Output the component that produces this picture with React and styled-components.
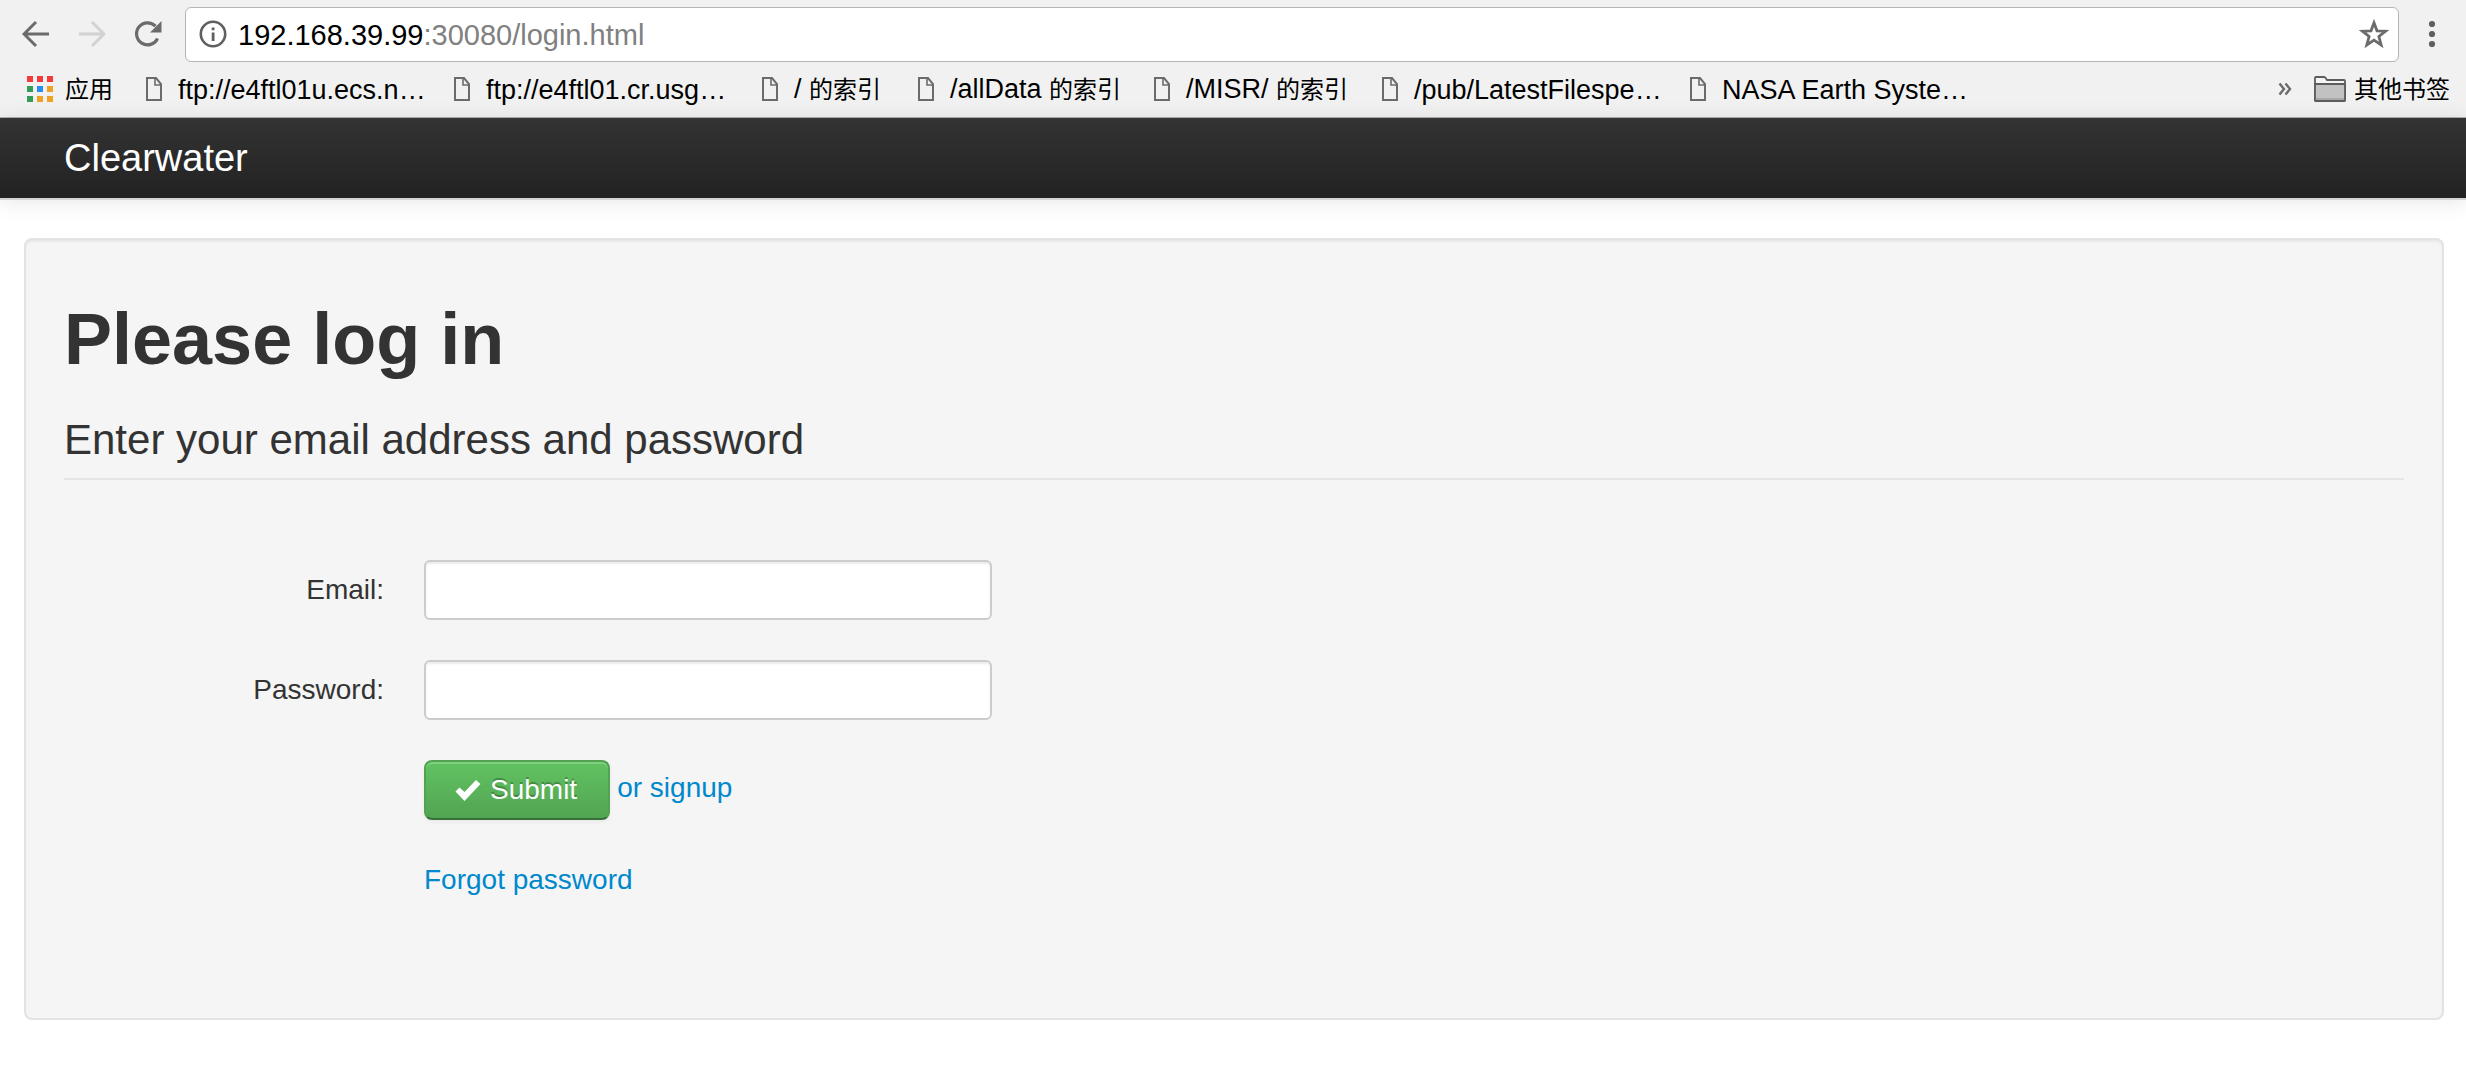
import React from "react";
import styled, { createGlobalStyle } from "styled-components";

const GlobalStyle = createGlobalStyle`
  *, *::before, *::after { box-sizing: border-box; }
  body {
    margin: 0;
    background: #fff;
    color: #333;
    font-family: "Liberation Sans", "Noto Sans CJK SC", sans-serif;
    font-size: 28px;
  }
  a { color: #0088cc; text-decoration: none; }
  svg { display: block; flex: none; }
`;

const BrowserChrome = styled.header`
  background: #f1f1f1;
  border-bottom: 1px solid #a9b1aa;
  color: #000;
`;

const Toolbar = styled.div`
  display: flex;
  align-items: center;
  height: 68px;
  padding: 0 18px 0 20px;
`;

const ToolButton = styled.button`
  display: flex;
  align-items: center;
  justify-content: center;
  width: 32px;
  height: 32px;
  margin-right: ${(p) => p.$after || 0}px;
  padding: 0;
  border: 0;
  background: none;
`;

const AddressBar = styled.div`
  flex: 1;
  display: flex;
  align-items: center;
  height: 55px;
  margin-right: 17px;
  padding: 0 8px 0 11px;
  border: 1px solid #b5b5b5;
  border-radius: 6px;
  background: #fff;
`;

const Address = styled.div`
  flex: 1;
  margin-left: 9px;
  font-size: 29px;
  line-height: 40px;
  padding-top: 2px;
  white-space: nowrap;
  color: #808080;
`;

const Host = styled.span`
  color: #000;
`;

const BookmarkBar = styled.nav`
  display: flex;
  align-items: center;
  height: 49px;
  padding: 0 16px 8px 27px;
  line-height: 40px;
`;

const Bookmark = styled.a`
  display: flex;
  align-items: center;
  gap: 16px;
  width: ${(p) => p.$width}px;
  color: #000;
  white-space: nowrap;
`;

const BookmarkLabel = styled.span`
  padding-top: 2px;
  font-size: 27px;
`;

const Chinese = styled.span`
  font-size: 24px;
`;

const AppsLink = styled(Bookmark)`
  gap: 12px;
`;

const Overflow = styled.div`
  display: flex;
  align-items: center;
  gap: 13px;
  margin-left: auto;
`;

const FolderLink = styled(Bookmark)`
  gap: 8px;
  width: auto;
`;

const Navbar = styled.div`
  height: 82px;
  padding: 0 64px;
  background: linear-gradient(#333, #222);
  border-bottom: 2px solid #d4d4d4;
  box-shadow: 0 2px 20px rgba(0, 0, 0, 0.1);
`;

const Brand = styled.a`
  && { color: #fff; }
  font-size: 38px;
  line-height: 80px;
`;

const Well = styled.main`
  margin: 38px 22px 38px 24px;
  padding: 58px 38px 118px;
  border: 2px solid #e3e3e3;
  border-radius: 8px;
  background: #f5f5f5;
  box-shadow: inset 0 2px 2px rgba(0, 0, 0, 0.05);
`;

const Title = styled.h1`
  margin: 0 0 18px;
  font-size: 72px;
  line-height: 82px;
`;

const Fieldset = styled.fieldset`
  margin: 0;
  padding: 0;
  border: 0;
`;

const Legend = styled.legend`
  width: 100%;
  margin-bottom: 80px;
  padding: 4px 0 0;
  border-bottom: 2px solid #e5e5e5;
  font-size: 42px;
  line-height: 76px;
`;

const Fields = styled.div`
  display: grid;
  grid-template-columns: 320px 1fr;
  gap: 40px;
`;

const Label = styled.label`
  line-height: 60px;
  text-align: right;
`;

const TextField = styled.input`
  width: 568px;
  height: 60px;
  padding: 8px 12px;
  border: 2px solid #ccc;
  border-radius: 6px;
  background: #fff;
  box-shadow: inset 0 2px 2px rgba(0, 0, 0, 0.075);
  font: inherit;
`;

const Actions = styled.div`
  grid-column: 2;
  display: flex;
  gap: 7px;
  line-height: 56px;
`;

const Submit = styled.button`
  display: flex;
  align-items: center;
  gap: 8px;
  height: 60px;
  padding: 0 31px 0 28px;
  border: 2px solid;
  border-color: #51a351 #51a351 #387038;
  border-radius: 8px;
  background: linear-gradient(#62c462, #51a351) border-box;
  box-shadow: inset 0 2px 0 rgba(255, 255, 255, 0.2), 0 2px 4px rgba(0, 0, 0, 0.05);
  color: #fff;
  font: inherit;
  text-shadow: 0 -2px 0 rgba(0, 0, 0, 0.25);
`;

const Recovery = styled.div`
  grid-column: 2;
  line-height: 40px;
`;

const Arrow = ({ color, flip }) => (
  <svg width="28" height="28" viewBox="0 0 28 28" fill="none" stroke={color} strokeWidth="3">
    <path d={flip ? "M1 14H26M14 2L26 14L14 26" : "M27 14H2M14 2L2 14L14 26"} />
  </svg>
);

const Reload = () => (
  <svg width="28" height="28" viewBox="0 0 28 28">
    <path d="M23.5 18.5A11 11 0 1 1 21.5 6.2" fill="none" stroke="#6b6b6b" strokeWidth="3.2" />
    <path d="M27.5 1V12.5H16Z" fill="#6b6b6b" />
  </svg>
);

const Info = () => (
  <svg width="28" height="28" viewBox="0 0 28 28">
    <circle cx="14" cy="14" r="12.2" fill="none" stroke="#5f5f5f" strokeWidth="2.6" />
    <path d="M12.7 12.5h2.8V21h-2.8zM12.7 7.5h2.8v2.8h-2.8z" fill="#5f5f5f" />
  </svg>
);

const Star = () => (
  <svg width="30" height="30" viewBox="0 0 30 30">
    <path
      d="M15 3.8L18 11.8L26.5 12.2L19.9 17.5L22.2 26L15 21.2L7.8 26L10.1 17.5L3.5 12.2L12 11.8Z"
      fill="none"
      stroke="#6b6b6b"
      strokeWidth="2.8"
    />
  </svg>
);

const Dots = () => (
  <svg width="8" height="28" viewBox="0 0 8 28" fill="#5f5f5f">
    <circle cx="4" cy="4" r="3.1" />
    <circle cx="4" cy="14" r="3.1" />
    <circle cx="4" cy="24" r="3.1" />
  </svg>
);

const APP_COLORS = [
  "#f33b3b", "#f33b3b", "#f33b3b",
  "#359b5b", "#2a8df4", "#f0a224",
  "#359b5b", "#f0a224", "#f0a224",
];

const Apps = () => (
  <svg width="26" height="26" viewBox="0 0 26 26">
    {APP_COLORS.map((color, i) => (
      <rect key={i} x={(i % 3) * 10} y={Math.floor(i / 3) * 10} width="6" height="6" fill={color} />
    ))}
  </svg>
);

const PageIcon = () => (
  <svg width="16" height="24" viewBox="0 0 16 24" fill="none" stroke="#6b6b6b" strokeWidth="2">
    <path d="M1 1H10L15 7V23H1Z" />
    <path d="M9 1V8H15" strokeWidth="1.6" />
  </svg>
);

const Chevrons = () => (
  <svg width="14" height="14" viewBox="0 0 14 14" fill="none" stroke="#6b6b6b" strokeWidth="2.4">
    <path d="M1.5 1.5L6 7L1.5 12.5M7.5 1.5L12 7L7.5 12.5" />
  </svg>
);

const Folder = () => (
  <svg width="32" height="26" viewBox="0 0 32 26">
    <path d="M1 24V2Q1 1 2 1H10Q11 1 12 2.500L13 4H30Q31 4 31 5V24Q31 25 30 25H2Q1 25 1 24Z" fill="#f4f4f4" stroke="#5c5c5c" strokeWidth="1.8" />
    <path d="M1 8H31V24Q31 25 30 25H2Q1 25 1 24Z" fill="#c2c2c2" stroke="#5c5c5c" strokeWidth="1.8" />
    <path d="M2 23H30" stroke="#a8a8a8" strokeWidth="2" />
  </svg>
);

const Check = () => (
  <svg width="28" height="24" viewBox="0 0 28 24">
    <path d="M1.500 13.500L5.500 9.500L10.500 14L22 2L26.500 6L10.500 23Z" fill="#fff" />
  </svg>
);

const BOOKMARKS = [
  { label: "ftp://e4ftl01u.ecs.n…", width: 308 },
  { label: "ftp://e4ftl01.cr.usg…", width: 308 },
  { label: "/ ", chinese: "的索引", width: 156 },
  { label: "/allData ", chinese: "的索引", width: 236 },
  { label: "/MISR/ ", chinese: "的索引", width: 228 },
  { label: "/pub/LatestFilespe…", width: 308 },
  { label: "NASA Earth Syste…", width: 308 },
];

export default function App() {
  return (
    <>
      <GlobalStyle />
      <BrowserChrome>
        <Toolbar>
          <ToolButton aria-label="Back" $after={24}><Arrow color="#6b6b6b" /></ToolButton>
          <ToolButton aria-label="Forward" $after={24} disabled><Arrow color="#d2d2d2" flip /></ToolButton>
          <ToolButton aria-label="Reload" $after={21}><Reload /></ToolButton>
          <AddressBar>
            <ToolButton aria-label="Site information"><Info /></ToolButton>
            <Address>
              <Host>192.168.39.99</Host>:30080/login.html
            </Address>
            <ToolButton aria-label="Bookmark this page"><Star /></ToolButton>
          </AddressBar>
          <ToolButton aria-label="Menu"><Dots /></ToolButton>
        </Toolbar>
        <BookmarkBar>
          <AppsLink href="#apps" $width={119}>
            <Apps />
            <BookmarkLabel><Chinese>应用</Chinese></BookmarkLabel>
          </AppsLink>
          {BOOKMARKS.map((b) => (
            <Bookmark key={b.label} href="#bookmark" $width={b.width}>
              <PageIcon />
              <BookmarkLabel>
                {b.label}
                {b.chinese && <Chinese>{b.chinese}</Chinese>}
              </BookmarkLabel>
            </Bookmark>
          ))}
          <Overflow>
            <ToolButton aria-label="More bookmarks"><Chevrons /></ToolButton>
            <FolderLink href="#other">
              <Folder />
              <BookmarkLabel><Chinese>其他书签</Chinese></BookmarkLabel>
            </FolderLink>
          </Overflow>
        </BookmarkBar>
      </BrowserChrome>
      <Navbar>
        <Brand href="#home">Clearwater</Brand>
      </Navbar>
      <Well>
        <Title>Please log in</Title>
        <form onSubmit={(e) => e.preventDefault()}>
          <Fieldset>
            <Legend>Enter your email address and password</Legend>
            <Fields>
              <Label htmlFor="email">Email:</Label>
              <TextField id="email" type="text" />
              <Label htmlFor="password">Password:</Label>
              <TextField id="password" type="password" />
              <Actions>
                <Submit type="submit"><Check />Submit</Submit>
                <a href="#signup">or signup</a>
              </Actions>
              <Recovery>
                <a href="#forgot">Forgot password</a>
              </Recovery>
            </Fields>
          </Fieldset>
        </form>
      </Well>
    </>
  );
}
